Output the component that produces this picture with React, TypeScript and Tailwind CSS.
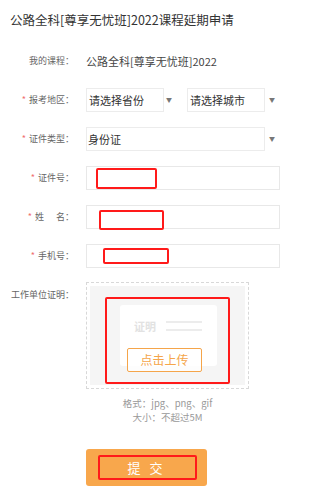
import React from 'react';

const font = { fontFamily: '"Noto Sans CJK SC", "Liberation Sans", sans-serif' };

function Label({ text, required }: { text: React.ReactNode; required?: boolean }) {
  return (
    <div className="w-[74px] shrink-0 flex items-center justify-end text-[9px] text-[#666]">
      {required && <span className="text-[#f07070] mr-[3px] text-[9px]">*</span>}
      <span>{text}</span>
    </div>
  );
}

function Arrow() {
  return <span className="text-[6px] text-[#777] leading-none">▼</span>;
}

function RedMark({ left, top, w, h }: { left: number; top: number; w: number; h: number }) {
  return (
    <div
      className="absolute border-2 border-[#ff1a1a] rounded-[2px]"
      style={{ left, top, width: w, height: h }}
    />
  );
}

function InputRow({ label, mark }: { label: React.ReactNode; mark: { left: number; top: number; w: number; h: number } }) {
  return (
    <div className="flex items-center h-[24px] gap-[12px]">
      <Label text={label} required />
      <div className="relative w-[194px] h-[24px] border border-[#e8e8e8] bg-white">
        <RedMark {...mark} />
      </div>
    </div>
  );
}

export default function App() {
  return (
    <div className="w-[315px] h-[500px] bg-white overflow-hidden pt-[12px]" style={font}>
      {/* Title */}
      <h1 className="pl-[10px] text-[12.5px] leading-[16px] text-[#333] font-normal">
        公路全科[尊享无忧班]2022课程延期申请
      </h1>

      <div className="mt-[21px] flex flex-col gap-[15px]">
        {/* My course */}
        <div className="flex items-center h-[24px] gap-[12px]">
          <Label text="我的课程：" />
          <span className="text-[11px] text-[#444]">公路全科[尊享无忧班]2022</span>
        </div>

        {/* Region */}
        <div className="flex items-center h-[24px] gap-[12px]">
          <Label text="报考地区：" required />
          <div className="flex items-center">
            <div className="w-[101px] flex items-center gap-[2px]">
              <div className="w-[78px] h-[24px] border border-[#ececec] flex items-center pl-[2px] text-[11px] text-[#333]">
                请选择省份
              </div>
              <Arrow />
            </div>
            <div className="flex items-center gap-[4px]">
              <div className="w-[78px] h-[24px] border border-[#ececec] flex items-center pl-[2px] text-[11px] text-[#333]">
                请选择城市
              </div>
              <Arrow />
            </div>
          </div>
        </div>

        {/* ID type */}
        <div className="flex items-center h-[24px] gap-[12px]">
          <Label text="证件类型：" required />
          <div className="flex items-center gap-[4px]">
            <div className="w-[179px] h-[24px] border border-[#ececec] flex items-center pl-[1px] text-[11px] text-[#333]">
              身份证
            </div>
            <Arrow />
          </div>
        </div>

        <InputRow label="证件号：" mark={{ left: 9, top: 1, w: 61, h: 21 }} />
        <InputRow label={<>姓<span className="inline-block w-[12px]" />名：</>} mark={{ left: 12, top: 4, w: 65, h: 20 }} />
        <InputRow label="手机号：" mark={{ left: 16, top: 3, w: 66, h: 16 }} />
      </div>

      {/* Upload */}
      <div className="mt-[14px] flex gap-[12px]">
        <div className="w-[74px] shrink-0 text-right text-[9px] text-[#666] pt-[6px]">工作单位证明：</div>
        <div className="flex flex-col items-center">
          <div className="w-[163px] h-[107px] border border-dashed border-[#d8d8d8] p-[3px]">
            <div className="relative w-full h-full bg-[#f5f5f5]">
              <div className="absolute left-[30px] top-[19px] w-[97px] h-[61px] bg-white rounded-[3px] flex items-start pt-[14px] pl-[14px] gap-[10px]">
                <span className="text-[11px] font-bold text-[#e2e2e2] leading-[14px]">证明</span>
                <div className="flex flex-col gap-[6px] pt-[2px]">
                  <div className="w-[36px] h-[2px] bg-[#ececec]" />
                  <div className="w-[36px] h-[2px] bg-[#ececec]" />
                </div>
              </div>
              <div className="absolute left-[37px] top-[62px] w-[75px] h-[24px] border border-[#f5a54a] rounded-[2px] bg-white/80 flex items-center justify-center text-[12px] text-[#f5a54a]">
                点击上传
              </div>
              <RedMark left={15} top={11} w={125} h={87} />
            </div>
          </div>
          <div className="mt-[7px] text-[9.5px] text-[#999] leading-[14px]">格式：jpg、png、gif</div>
          <div className="text-[9.5px] text-[#999] leading-[14px]">大小：不超过5M</div>
        </div>
      </div>

      {/* Submit */}
      <div className="mt-[25px] pl-[86px]">
        <div className="relative w-[121px] h-[37px] bg-[#f8a74c] rounded-[3px] flex items-center justify-center text-white text-[13px] tracking-[3px]">
          提 交
          <RedMark left={12} top={6} w={99} h={25} />
        </div>
      </div>
    </div>
  );
}
